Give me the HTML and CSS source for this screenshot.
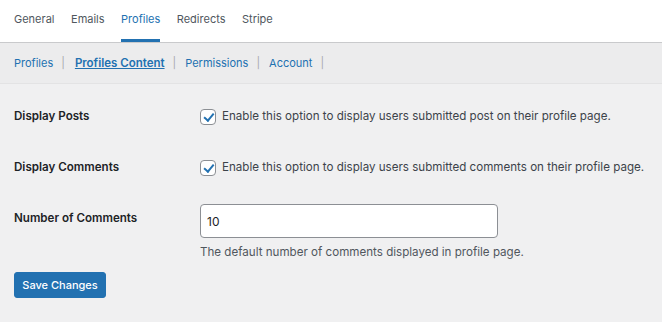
FILE: index.html
```html
<!DOCTYPE html>
<html lang="en">
  <head>
    <meta charset="UTF-8" />
    <meta name="viewport" content="width=device-width, initial-scale=1.0" />
    <title>Profiles Content</title>
    <link rel="stylesheet" href="styles.css">
  </head>
  <body>
    <nav class="tabs">
      <a href="#" class="tab">General</a>
      <a href="#" class="tab">Emails</a>
      <a href="#" class="tab active">Profiles</a>
      <a href="#" class="tab">Redirects</a>
      <a href="#" class="tab">Stripe</a>
    </nav>

    <div class="subnav">
      <a href="#">Profiles</a><span class="sep">|</span>
      <a href="#" class="current">Profiles Content</a><span class="sep">|</span>
      <a href="#">Permissions</a><span class="sep">|</span>
      <a href="#">Account</a><span class="sep">|</span>
    </div>

    <form class="settings">
      <div class="row">
        <div class="label">Display Posts</div>
        <label class="check">
          <input type="checkbox" checked />
          <span>Enable this option to display users submitted post on their profile page.</span>
        </label>
      </div>

      <div class="row">
        <div class="label">Display Comments</div>
        <label class="check">
          <input type="checkbox" checked />
          <span>Enable this option to display users submitted comments on their profile page.</span>
        </label>
      </div>

      <div class="row number-row">
        <div class="label">Number of Comments</div>
        <div class="field">
          <input type="text" class="text-input" value="10" />
          <p class="description">The default number of comments displayed in profile page.</p>
        </div>
      </div>

      <button type="button" class="button-primary">Save Changes</button>
    </form>
  </body>
</html>
```

FILE: styles.css
```css
body {
  margin: 0;
  background-color: #f0f0f1;
  font-family: Inter, "Noto Sans", sans-serif;
  font-size: 11.6px;
  line-height: 16px;
  color: #3c434a;
}
a {
  text-decoration: none;
}
.tabs {
  display: flex;
  gap: 16.5px;
  height: 42px;
  padding: 0 14px;
  background-color: #fff;
  border-bottom: 1px solid #c9cacc;
}
.tab {
  display: flex;
  align-items: center;
  height: 38px;
  padding-bottom: 1px;
  font-size: 11px;
  color: #50575e;
  border-bottom: 3px solid transparent;
}
.tab.active {
  color: #2271b1;
  border-bottom-color: #2271b1;
}
.subnav {
  display: flex;
  align-items: center;
  height: 40px;
  padding: 0 14px;
  background-color: #ececed;
  border-bottom: 1px solid #e3e3e4;
  font-size: 11px;
}
.subnav a {
  color: #2271b1;
}
.subnav a.current {
  font-size: 11.5px;
  font-weight: 600;
  text-decoration: underline;
}
.sep {
  margin: 0 9px 0 8px;
  color: #a7aaad;
}
.sep:first-of-type {
  margin-right: 10px;
}
.settings {
  padding: 24px 14px 0;
}
.row {
  display: grid;
  grid-template-columns: 186px 1fr;
  align-items: start;
  height: 51px;
}
.row + .row {
  height: 49px;
}
.label {
  font-weight: 600;
  color: #1d2327;
}
.check {
  display: flex;
  align-items: flex-start;
  gap: 6px;
}
.check input {
  appearance: none;
  flex: none;
  width: 16px;
  height: 16px;
  margin: 1px 0 0;
  border: 1px solid #8c8f94;
  border-radius: 4px;
  background-color: #fff;
  position: relative;
}
.check input:checked::after {
  content: "";
  position: absolute;
  left: 4.5px;
  top: 1px;
  width: 3.5px;
  height: 8px;
  border: solid #2271b1;
  border-width: 0 2px 2px 0;
  transform: rotate(40deg);
}
.number-row {
  height: auto;
}
.number-row .label {
  padding-top: 2px;
}
.text-input {
  display: block;
  width: 298px;
  height: 34px;
  box-sizing: border-box;
  padding: 0 6px;
  margin: -4px 0 0;
  border: 1px solid #8c8f94;
  border-radius: 4px;
  background-color: #fff;
  font-family: inherit;
  font-size: 12px;
  color: #1d2327;
}
.description {
  margin: 6px 0 0;
  color: #50575e;
}
.button-primary {
  margin-top: 15px;
  width: 92px;
  height: 26px;
  padding: 0;
  background-color: #2271b1;
  border: 1px solid #2271b1;
  border-radius: 3px;
  color: #fff;
  font-family: inherit;
  font-size: 11px;
  font-weight: 500;
}
```
